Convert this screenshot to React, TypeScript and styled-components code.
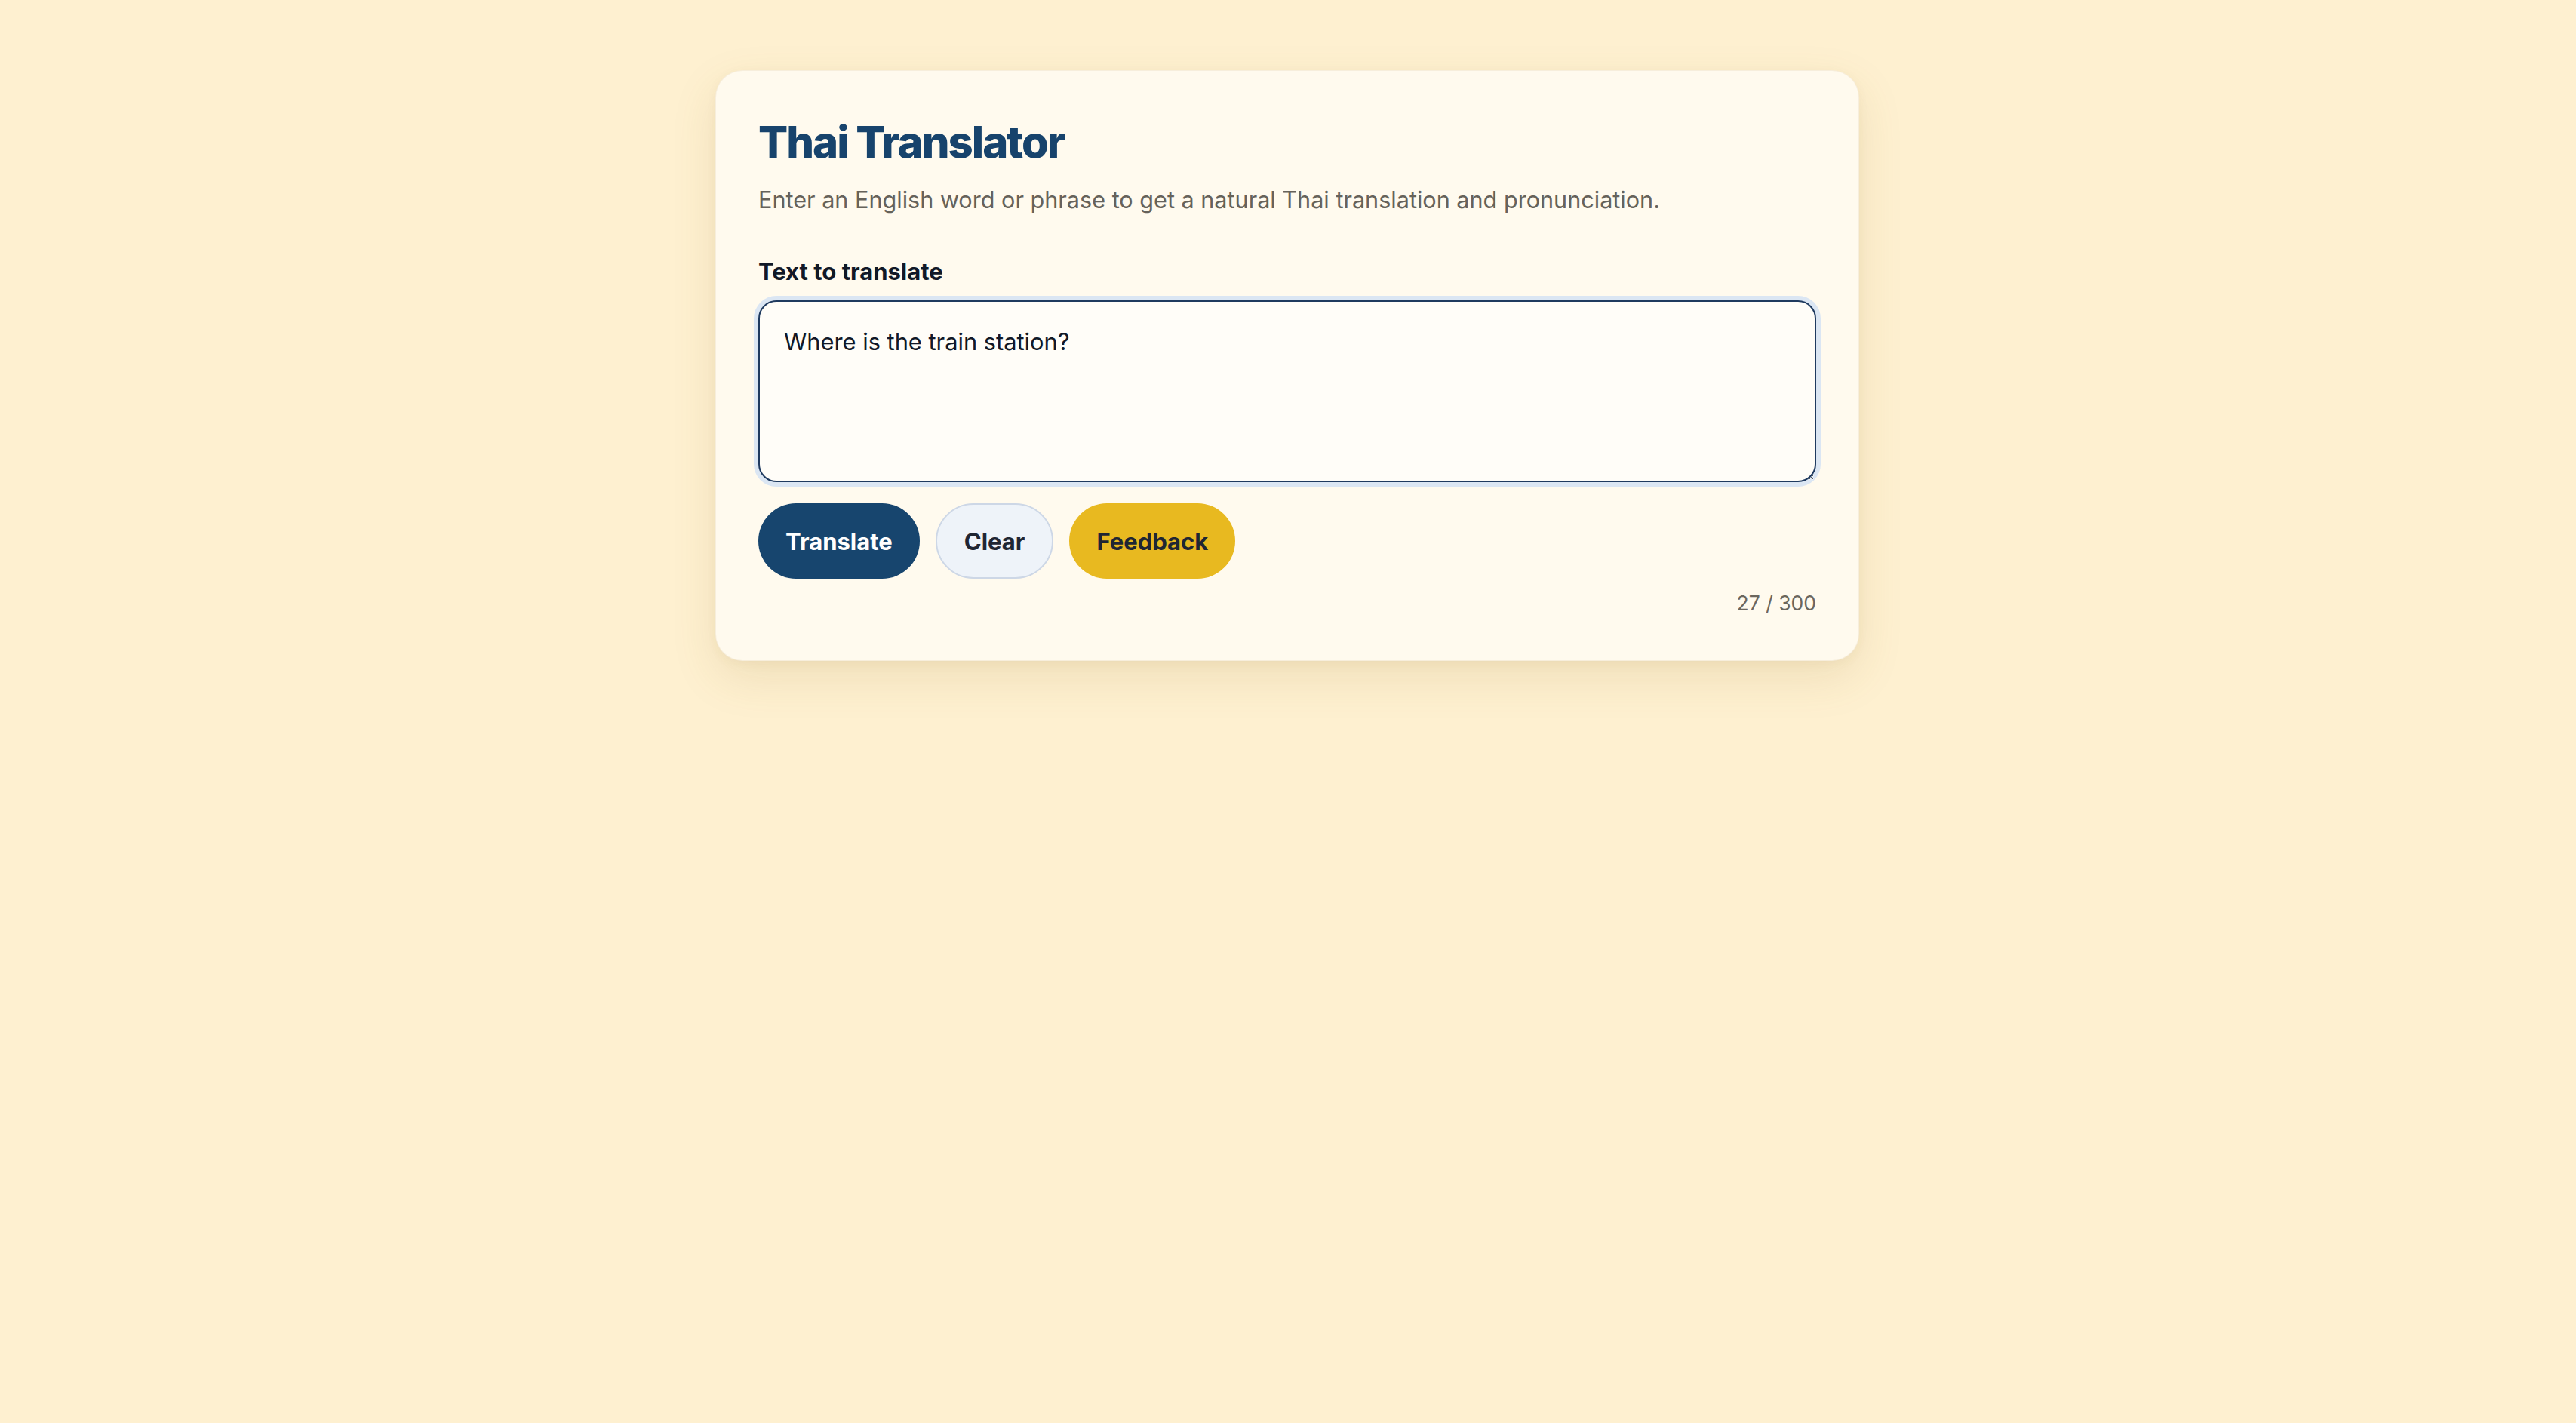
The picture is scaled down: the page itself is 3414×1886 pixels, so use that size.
import React, { useEffect, useRef, useState } from "react";
import styled, { createGlobalStyle } from "styled-components";

const GlobalStyle = createGlobalStyle`
  html, body {
    margin: 0;
    padding: 0;
    background: #fef0d0;
    min-height: 100%;
  }
  body {
    font-family: Inter, "Noto Sans", "Liberation Sans", sans-serif;
    -webkit-font-smoothing: antialiased;
  }
  * { box-sizing: border-box; }
`;

const Page = styled.main`
  min-height: 1886px;
  padding: 93px 2px 0 0;
  display: flex;
  justify-content: center;
  align-items: flex-start;
`;

const Card = styled.section`
  width: 1516px;
  padding: 59px 56px 56px;
  background: #fffaee;
  border: 1px solid rgba(200, 170, 110, 0.14);
  border-radius: 36px;
  box-shadow: 0 22px 60px rgba(140, 105, 30, 0.13), 0 4px 14px rgba(140, 105, 30, 0.05);
  display: flex;
  flex-direction: column;
`;

const Title = styled.h1`
  margin: 0;
  font-size: 58px;
  line-height: 70px;
  font-weight: 800;
  letter-spacing: -2px;
  color: #17436c;
`;

const Subtitle = styled.p`
  margin: 19px 0 0;
  font-size: 30.6px;
  line-height: 45px;
  font-weight: 400;
  color: #66625a;
`;

const Label = styled.label`
  margin-top: 50px;
  font-size: 31px;
  line-height: 45px;
  font-weight: 700;
  color: #111827;
`;

const TextArea = styled.textarea`
  margin-top: 16px;
  width: 100%;
  height: 241px;
  padding: 30px 32px;
  font-family: Inter, "Noto Sans", "Liberation Sans", sans-serif;
  font-size: 30.8px;
  line-height: 45px;
  color: #111827;
  background: #fffdf8;
  border: 2px solid #1f3a5f;
  border-radius: 24px;
  box-shadow: 0 0 0 6px #dbe6f3;
  outline: none;
  resize: vertical;
  caret-color: #111827;
`;

const Actions = styled.div`
  margin-top: 28px;
  display: flex;
  gap: 21px;
  align-items: center;
`;

const Button = styled.button<{ $variant: "primary" | "ghost" | "accent" }>`
  height: 100px;
  padding: 0 36px;
  border-radius: 999px;
  font-family: Inter, "Noto Sans", "Liberation Sans", sans-serif;
  font-size: 31px;
  font-weight: 700;
  line-height: 1;
  cursor: pointer;
  border: ${(p) => (p.$variant === "ghost" ? "2px solid #cdd7e6" : "none")};
  background: ${(p) =>
    p.$variant === "primary" ? "#17456e" : p.$variant === "accent" ? "#e8b920" : "#eef3f9"};
  color: ${(p) => (p.$variant === "primary" ? "#ffffff" : "#1f2633")};
`;

const Counter = styled.div`
  margin-top: 12px;
  align-self: flex-end;
  font-size: 26.5px;
  line-height: 40px;
  color: #6b665d;
`;

export default function App() {
  const [text, setText] = useState("Where is the train station?");
  const ref = useRef<HTMLTextAreaElement>(null);

  useEffect(() => {
    const el = ref.current;
    if (el) {
      el.focus();
      el.setSelectionRange(el.value.length, el.value.length);
    }
  }, []);

  return (
    <>
      <GlobalStyle />
      <Page>
        <Card>
          <Title>Thai Translator</Title>
          <Subtitle>
            Enter an English word or phrase to get a natural Thai translation and pronunciation.
          </Subtitle>
          <Label htmlFor="src">Text to translate</Label>
          <TextArea
            id="src"
            ref={ref}
            value={text}
            maxLength={300}
            onChange={(e) => setText(e.target.value)}
          />
          <Actions>
            <Button $variant="primary">Translate</Button>
            <Button $variant="ghost" onClick={() => setText("")}>
              Clear
            </Button>
            <Button $variant="accent">Feedback</Button>
          </Actions>
          <Counter>{text.length} / 300</Counter>
        </Card>
      </Page>
    </>
  );
}
